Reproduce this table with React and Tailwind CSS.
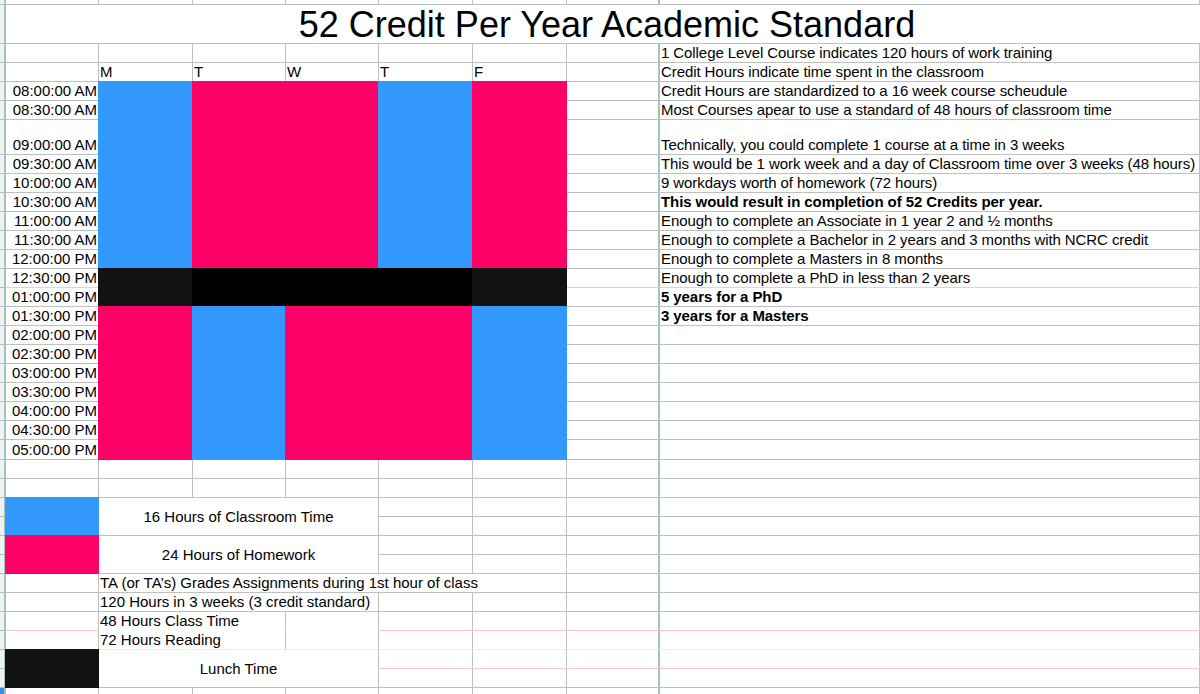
import { Fragment } from 'react';

const LINE = 'border-r border-b border-[#c0c0c0] bg-white';
const LINE_PINK = 'border-r border-b border-r-[#c0c0c0] border-b-[#f7caca] bg-white';
const LINE_SOFT = 'border-r border-b border-r-[#c0c0c0] border-b-[#ececec] bg-white';
const LINE_NONE = 'border-r border-b border-r-[#c0c0c0] border-b-white bg-white';
const FREEZE = 'border-r-2 border-b border-r-[#a5c3ba] border-b-[#c0c0c0] bg-white';
const FREEZE_PINK = 'border-r-2 border-b border-r-[#a5c3ba] border-b-[#f7caca] bg-white';
const FREEZE_SOFT = 'border-r-2 border-b border-r-[#a5c3ba] border-b-[#ececec] bg-white';
const STRIP = 'border-r-2 border-b border-[#a5c3ba] bg-[#f1f1f1]';
const STRIP_SEL = 'border-r-2 border-b border-[#a5c3ba] bg-[#3c8fe8]';

const BOTTOM = 'items-end pb-px leading-[17px]';
const CENTER = 'items-center justify-center leading-[17px]';

const BLUE = 'bg-[#3399ff]';
const PINK = 'bg-[#ff0066]';
const DARK = 'bg-[#121212]';

function Cell({ line = LINE, align = BOTTOM, className = '', children }) {
  return (
    <div className={`flex min-w-0 overflow-hidden whitespace-nowrap ${line} ${align} ${className}`}>
      {children}
    </div>
  );
}

// coloured block, pulled up/left one pixel so it covers the grid line
function Fill({ className }) {
  return <div className={`relative z-10 -mt-px -ml-px ${className}`} />;
}

const five = (line = LINE) =>
  ['b', 'c', 'd', 'e', 'f'].map((k) => <Cell key={k} line={line} />);

const ef = (line = LINE) => [<Cell key="e" line={line} />, <Cell key="f" line={line} />];

const rows = [
  { mid: five() },
  { title: true },
  { mid: five(), h: '1 College Level Course indicates 120 hours of work training' },
  {
    mid: ['M', 'T', 'W', 'T', 'F'].map((d, i) => (
      <Cell key={i} className="pl-px">{d}</Cell>
    )),
    h: 'Credit Hours indicate time spent in the classroom',
  },
  {
    a: '08:00:00 AM',
    mid: [
      <Fill key="b" className={`${BLUE} row-span-9`} />,
      <Fill key="cd" className={`${PINK} col-span-2 row-span-9`} />,
      <Fill key="e" className={`${BLUE} row-span-9`} />,
      <Fill key="f" className={`${PINK} row-span-9`} />,
    ],
    h: 'Credit Hours are standardized to a 16 week course scheudule',
  },
  { a: '08:30:00 AM', h: 'Most Courses apear to use a standard of 48 hours of classroom time' },
  { a: '09:00:00 AM', h: 'Technically, you could complete 1 course at a time in 3 weeks' },
  { a: '09:30:00 AM', h: 'This would be 1 work week and a day of Classroom time over 3 weeks (48 hours)' },
  { a: '10:00:00 AM', h: '9 workdays worth of homework (72 hours)' },
  { a: '10:30:00 AM', h: 'This would result in completion of 52 Credits per year.', bold: true },
  { a: '11:00:00 AM', h: 'Enough to complete an Associate in 1 year 2 and ½ months' },
  { a: '11:30:00 AM', h: 'Enough to complete a Bachelor in 2 years and 3 months with NCRC credit' },
  { a: '12:00:00 PM', h: 'Enough to complete a Masters in 8 months' },
  {
    a: '12:30:00 PM',
    aLine: LINE_PINK,
    mid: [
      <Fill key="b" className={`${DARK} row-span-2`} />,
      <Fill key="cde" className="bg-black col-span-3 row-span-2" />,
      <Fill key="f" className={`${DARK} row-span-2`} />,
    ],
    g: FREEZE_PINK,
    h: 'Enough to complete a PhD in less than 2 years',
    hLine: LINE_PINK,
  },
  { a: '01:00:00 PM', h: '5 years for a PhD', bold: true },
  {
    a: '01:30:00 PM',
    mid: [
      <Fill key="b" className={`${PINK} row-span-8`} />,
      <Fill key="c" className={`${BLUE} row-span-8`} />,
      <Fill key="de" className={`${PINK} col-span-2 row-span-8`} />,
      <Fill key="f" className={`${BLUE} row-span-8`} />,
    ],
    h: '3 years for a Masters',
    bold: true,
  },
  { a: '02:00:00 PM' },
  { a: '02:30:00 PM' },
  { a: '03:00:00 PM' },
  { a: '03:30:00 PM' },
  { a: '04:00:00 PM' },
  { a: '04:30:00 PM' },
  { a: '05:00:00 PM' },
  { mid: five() },
  { mid: five() },
  {
    aNode: <Fill key="a" className={`${BLUE} row-span-2`} />,
    mid: [
      <Cell key="bcd" align={CENTER} className="col-span-3 row-span-2">16 Hours of Classroom Time</Cell>,
      ...ef(),
    ],
  },
  { aNode: null, mid: ef() },
  {
    aNode: <Fill key="a" className={`${PINK} row-span-2`} />,
    mid: [
      <Cell key="bcd" align={CENTER} className="col-span-3 row-span-2">24 Hours of Homework</Cell>,
      ...ef(),
    ],
  },
  { aNode: null, mid: ef() },
  {
    mid: [
      <Cell key="bf" className="col-span-5 pl-px">TA (or TA’s) Grades Assignments during 1st hour of class</Cell>,
    ],
  },
  {
    mid: [
      <Cell key="bd" className="col-span-3 pl-px">120 Hours in 3 weeks (3 credit standard)</Cell>,
      ...ef(),
    ],
  },
  {
    aLine: LINE_PINK,
    mid: [
      <Cell key="bc" line={LINE_NONE} className="col-span-2 pl-px">48 Hours Class Time</Cell>,
      <Cell key="d" line={LINE_NONE} />,
      ...ef(LINE_PINK),
    ],
    g: FREEZE_PINK,
    hLine: LINE_PINK,
  },
  {
    mid: [
      <Cell key="bc" line={LINE_SOFT} className="col-span-2 pl-px">72 Hours Reading</Cell>,
      <Cell key="d" line={LINE_SOFT} />,
      ...ef(LINE_SOFT),
    ],
    g: FREEZE_SOFT,
    hLine: LINE_SOFT,
  },
  {
    aNode: <Fill key="a" className={`${DARK} row-span-2`} />,
    mid: [
      <Cell key="bcd" align={CENTER} className="col-span-3 row-span-2">Lunch Time</Cell>,
      ...ef(LINE_PINK),
    ],
    g: FREEZE_PINK,
    hLine: LINE_PINK,
  },
  { aNode: null, mid: ef() },
  { strip: STRIP_SEL, mid: five() },
];

export default function App() {
  return (
    <div className="h-[694px] w-[1200px] overflow-hidden bg-white">
      <div className="grid grid-cols-[6px_93px_94px_93px_93px_94px_94px_93px_1fr] grid-rows-[5px_39px_19px_19px_19px_19px_35px_repeat(13,19px)_19px_19px_20px_repeat(13,19px)] font-['Liberation_Sans',Arial,sans-serif] text-[15px] text-black">
        {rows.map((r, i) => {
          if (r.title) {
            return (
              <Fragment key={i}>
                <Cell line={STRIP} />
                <div className="col-span-8 flex items-start justify-center border-b border-[#c0c0c0] bg-white pt-[2px] pl-[8px] text-[36px] leading-none">
                  52 Credit Per Year Academic Standard
                </div>
              </Fragment>
            );
          }
          return (
            <Fragment key={i}>
              <Cell line={r.strip || STRIP} />
              {'aNode' in r ? (
                r.aNode
              ) : (
                <Cell line={r.aLine || LINE} className="justify-end pr-px">
                  {r.a}
                </Cell>
              )}
              {r.mid}
              <Cell line={r.g || FREEZE} />
              <Cell line={r.hLine || LINE} className={`pl-px tracking-[-0.08px] ${r.bold ? 'font-bold' : ''}`}>
                {r.h}
              </Cell>
            </Fragment>
          );
        })}
      </div>
    </div>
  );
}
